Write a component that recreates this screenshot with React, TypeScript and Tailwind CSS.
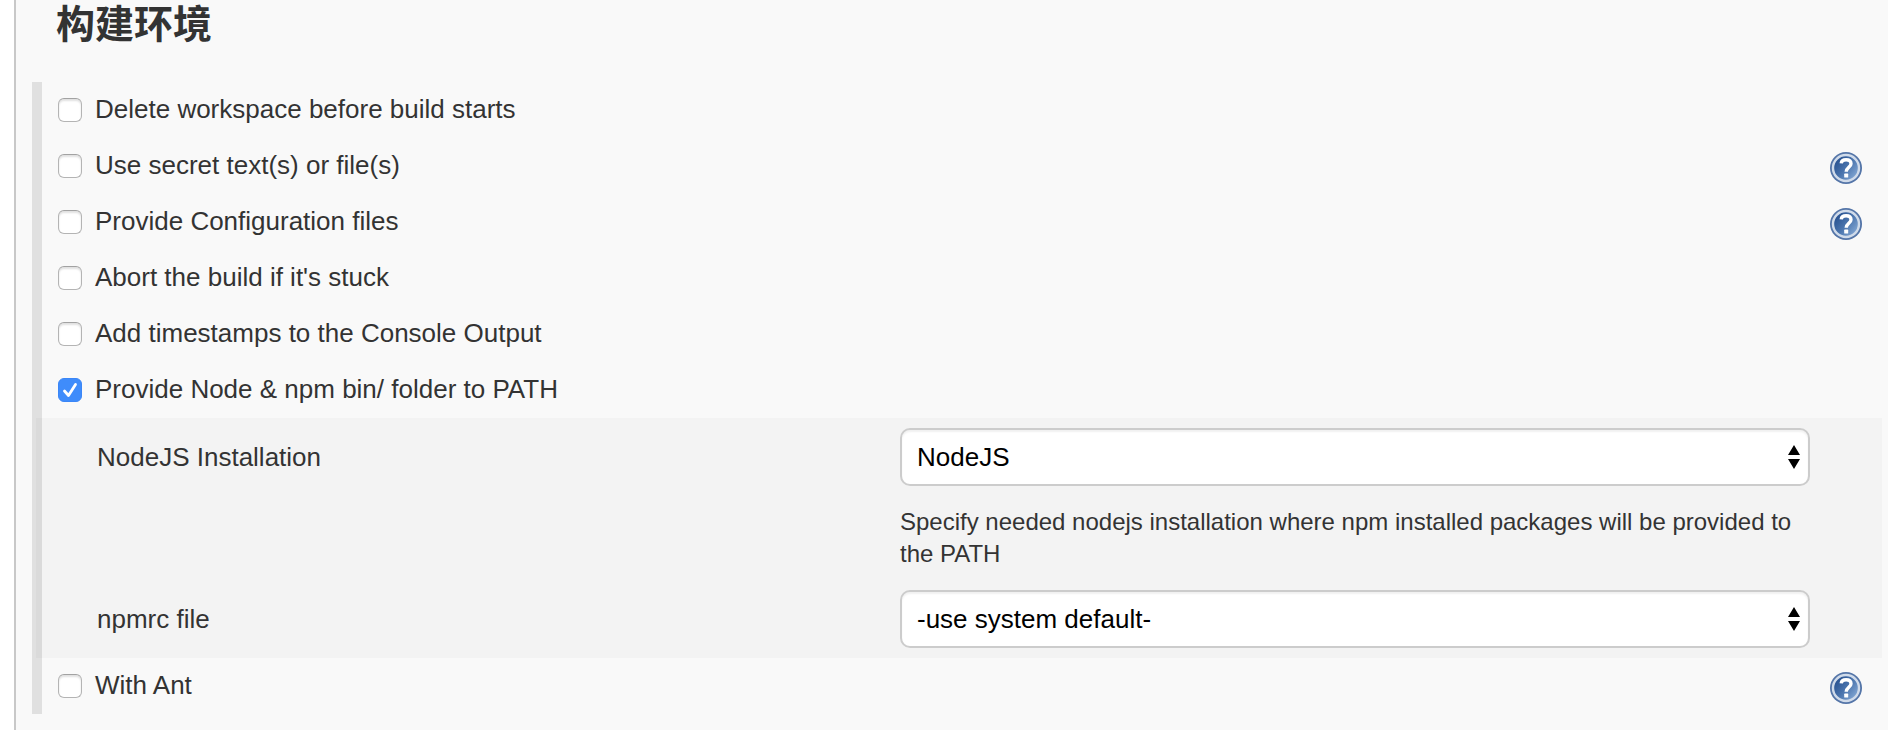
import { useId, useState } from "react";

type Option = { label: string; checked?: boolean; help?: boolean };

const options: Option[] = [
  { label: "Delete workspace before build starts" },
  { label: "Use secret text(s) or file(s)", help: true },
  { label: "Provide Configuration files", help: true },
  { label: "Abort the build if it's stuck" },
  { label: "Add timestamps to the Console Output" },
  { label: "Provide Node & npm bin/ folder to PATH", checked: true },
];

function HelpButton({ topic }: { topic: string }) {
  const fill = useId();
  return (
    <button type="button" aria-label={`Help for feature: ${topic}`} className="mt-[14px] size-8 shrink-0">
      <svg viewBox="0 0 32 32" className="size-8" aria-hidden="true">
        <defs>
          <linearGradient id={fill} x1="0" y1="0.1" x2="1" y2="0.9">
            <stop offset="0.1" stopColor="#26508f" />
            <stop offset="0.5" stopColor="#4a74ad" />
            <stop offset="1" stopColor="#8fb2dc" />
          </linearGradient>
        </defs>
        <circle cx="16" cy="16" r="16" fill="#5475a8" />
        <circle cx="16" cy="16" r="13" fill={`url(#${fill})`} stroke="#d0dbea" strokeWidth="2.4" />
        <path
          d="M11.2 11.4c.3-2.600 2.200-3.600 4.900-3.600 3 0 4.900 1.500 4.900 3.900 0 3.600-4.800 3.600-4.800 8.100"
          fill="none"
          stroke="#fff"
          strokeWidth="3.400"
        />
        <rect x="14.200" y="21.600" width="4" height="4" rx="0.600" fill="#fff" />
      </svg>
    </button>
  );
}

function OptionRow({ label, checked = false, help }: Option) {
  const [on, setOn] = useState(checked);
  return (
    <div className="flex h-14 items-start justify-between pr-5 pl-4">
      <label className="flex h-14 items-center gap-[13px]">
        <span className="grid size-6 shrink-0 place-items-center">
          <input
            type="checkbox"
            checked={on}
            onChange={(e) => setOn(e.target.checked)}
            className="peer col-start-1 row-start-1 size-6 appearance-none rounded-md border border-[#b4b4b4] border-t-[#a2a2a2] bg-white shadow-[inset_0_2px_2px_rgba(0,0,0,0.12)] checked:border-[#3b86f7] checked:bg-[#3f8cfb] checked:shadow-none"
          />
          <svg
            viewBox="0 0 24 24"
            aria-hidden="true"
            className="pointer-events-none invisible col-start-1 row-start-1 size-6 peer-checked:visible"
          >
            <path
              d="M6.500 13l4 4.500 7-11"
              fill="none"
              stroke="#fff"
              strokeWidth="2.800"
              strokeLinecap="round"
              strokeLinejoin="round"
            />
          </svg>
        </span>
        <span className="pb-0.5">{label}</span>
      </label>
      {help && <HelpButton topic={label} />}
    </div>
  );
}

function SelectField({ id, label, choices, hint }: { id: string; label: string; choices: string[]; hint?: string }) {
  return (
    <div className="grid grid-cols-[15fr_17fr]">
      <label htmlFor={id} className="flex h-[78px] items-center">
        {label}
      </label>
      <div>
        <div className="relative my-[10px]">
          <select
            id={id}
            className="block h-[58px] w-full appearance-none rounded-[10px] border-2 border-[#cccccc] bg-white pr-8 pl-[15px] text-black shadow-[inset_0_2px_2px_rgba(0,0,0,0.06)]"
          >
            {choices.map((choice) => (
              <option key={choice}>{choice}</option>
            ))}
          </select>
          <svg
            viewBox="0 0 12 24"
            aria-hidden="true"
            className="pointer-events-none absolute top-[17px] right-[10px] h-6 w-3"
          >
            <path d="M0 10L6 0l6 10zM0 14h12L6 24z" fill="#000" />
          </svg>
        </div>
        {hint && <p className="py-[10px] text-2xl leading-8">{hint}</p>}
      </div>
    </div>
  );
}

export default function App() {
  return (
    <div className="min-h-screen bg-white pl-[14px] font-['Liberation_Sans','Noto_Sans_CJK_SC',sans-serif] text-[26px] leading-8 text-[#333333]">
      <main className="min-h-screen border-l-2 border-[#c8c8c8] bg-[#f9f9f9] pr-[6px] pb-4 pl-4">
        <h1 className="h-[82px] pl-6 text-[39px] leading-[50px] font-bold">构建环境</h1>
        <div className="border-l-[10px] border-[#e0e0e0]">
          {options.map((option) => (
            <OptionRow key={option.label} {...option} />
          ))}
          <section className="-ml-[6px] bg-black/[0.025] pr-[72px] pl-[61px]">
            <SelectField
              id="nodejs-installation"
              label="NodeJS Installation"
              choices={["NodeJS"]}
              hint="Specify needed nodejs installation where npm installed packages will be provided to the PATH"
            />
            <SelectField id="npmrc-file" label="npmrc file" choices={["-use system default-"]} />
          </section>
          <OptionRow label="With Ant" help />
        </div>
      </main>
    </div>
  );
}
